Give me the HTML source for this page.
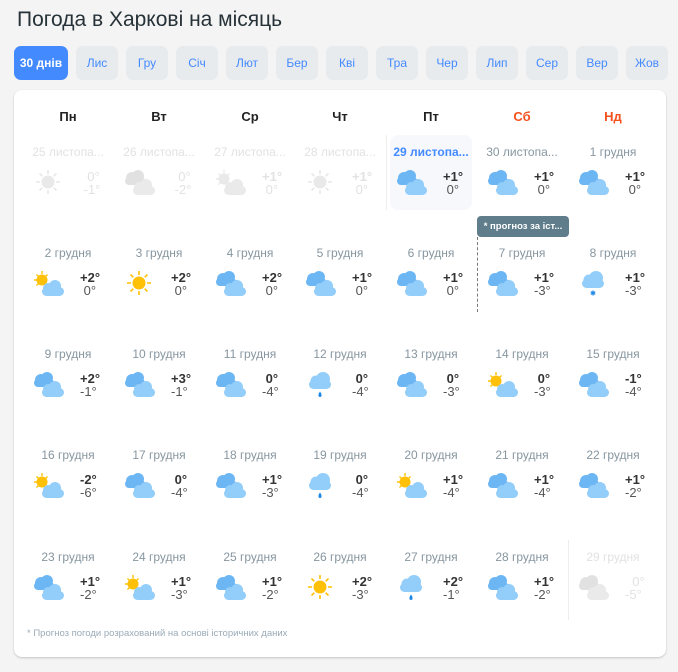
<!DOCTYPE html><html><head><meta charset="utf-8"><style>
body{margin:0;width:678px;height:672px;background:#f4f4f4;font-family:"Liberation Sans","DejaVu Sans",sans-serif;position:relative;overflow:hidden}
h1{position:absolute;left:17px;top:8px;margin:0;font-weight:normal;font-size:21px;color:#263238}
.t{position:absolute;top:46px;height:34px;width:42px;border-radius:7px;background:#e8ebee;color:#448aff;font-size:12px;line-height:34px;text-align:center}
.t.a{background:#448aff;color:#fff;font-weight:bold;width:54px}
.card{position:absolute;left:14px;top:90px;width:652px;height:567px;background:#fff;border-radius:8px;box-shadow:0 1px 2px rgba(0,0,0,.2)}
.h{position:absolute;top:19px;width:90px;text-align:center;font-weight:bold;font-size:13px;color:#222}
.c{position:absolute;width:90px;height:80px}
.d{position:absolute;left:0;top:0;width:90px;text-align:center;font-size:12px;line-height:16px;color:#8796a0;white-space:nowrap}
.c svg{position:absolute;left:8px;top:23px;width:34px;height:30px}
.hi{position:absolute;left:57px;top:26px;font-size:13px;font-weight:bold;color:#333;line-height:13px}
.lo{position:absolute;left:57px;top:39px;font-size:13px;color:#555;line-height:13px}
.f .d,.f .hi,.f .lo{color:#e2e2e2}
.f svg{opacity:.35;filter:grayscale(1)}
</style></head><body>
<svg width="0" height="0" style="position:absolute"><defs>
<g id="cl"><g fill="#6db6f4"><circle cx="10" cy="11" r="6"/><circle cx="16" cy="9" r="6"/><rect x="3" y="10" width="20" height="8" rx="4"/></g><g fill="#93cdf9"><circle cx="17" cy="20" r="5"/><circle cx="24" cy="18" r="6"/><rect x="11" y="19" width="22" height="9" rx="4.5"/></g></g>
<g id="sn"><g stroke="#ffc107" stroke-width="1.6"><path d="M17 3v4M17 23v4M5 15h4M25 15h4M8.5 6.5l2.8 2.8M22.7 20.7l2.8 2.8M8.5 23.5l2.8-2.8M22.7 9.3l2.8-2.8"/></g><circle cx="17" cy="15" r="6.5" fill="#ffc107"/></g>
<g id="sc"><g stroke="#ffc107" stroke-width="1.4"><path d="M11 3v3M3 12h3M5.5 6.5l2 2M16.5 6.5l-2 2M5.5 17.5l2-2"/></g><circle cx="11" cy="12" r="5.5" fill="#ffc107"/><g fill="#93cdf9"><circle cx="17" cy="20" r="5"/><circle cx="24" cy="18" r="6"/><rect x="11" y="19" width="22" height="9" rx="4.5"/></g></g>
<g id="rn"><g fill="#93cdf9"><circle cx="13" cy="12" r="5.5"/><circle cx="20" cy="10" r="7"/><rect x="6" y="11" width="22" height="9" rx="4.5"/></g><path d="M17 22.5c-2 2.5-2.2 5.5 0 5.5s2-3 0-5.5z" fill="#1e88e5"/></g>
<g id="sw"><g fill="#93cdf9"><circle cx="13" cy="12" r="5.5"/><circle cx="20" cy="10" r="7"/><rect x="6" y="11" width="22" height="9" rx="4.5"/></g><path d="M17 22.5v5M14.8 23.7l4.4 2.6M14.8 26.3l4.4-2.6" stroke="#1e88e5" stroke-width="1.3"/></g>
</defs></svg>
<h1>Погода в Харкові на місяць</h1>
<div class="t a" style="left:14px">30 днів</div>
<div class="t" style="left:76px">Лис</div><div class="t" style="left:126px">Гру</div><div class="t" style="left:176px">Січ</div><div class="t" style="left:226px">Лют</div><div class="t" style="left:276px">Бер</div><div class="t" style="left:326px">Кві</div><div class="t" style="left:376px">Тра</div><div class="t" style="left:426px">Чер</div><div class="t" style="left:476px">Лип</div><div class="t" style="left:526px">Сер</div><div class="t" style="left:576px">Вер</div><div class="t" style="left:626px">Жов</div>
<div class="card">
<div class="h" style="left:9px">Пн</div><div class="h" style="left:100px">Вт</div><div class="h" style="left:191px">Ср</div><div class="h" style="left:281px">Чт</div><div class="h" style="left:372px">Пт</div><div class="h" style="left:463px;color:#f4511e">Сб</div><div class="h" style="left:554px;color:#f4511e">Нд</div>
<div style="position:absolute;left:376px;top:45px;width:82px;height:75px;background:#f6f8fb;border-radius:8px"></div>
<div style="position:absolute;left:372px;top:45px;width:1px;height:75px;background:#eee"></div>
<div style="position:absolute;left:554px;top:450px;width:1px;height:80px;background:#eee"></div>
<div style="position:absolute;left:463px;top:126px;width:92px;height:21px;background:#607d8b;border-radius:4px;color:#fff;font-size:9.5px;font-weight:bold;line-height:21px;text-align:center">* прогноз за іст...</div>
<div style="position:absolute;left:463px;top:147px;height:75px;border-left:1px dashed #777"></div>

<div class="c f" style="left:9px;top:54px"><div class="d">25 листопа...</div><svg><use href="#sn"/></svg><div class="hi" style="font-weight:normal">&nbsp;&nbsp;0°</div><div class="lo">&nbsp;-1°</div></div>
<div class="c f" style="left:100px;top:54px"><div class="d">26 листопа...</div><svg><use href="#cl"/></svg><div class="hi" style="font-weight:normal">&nbsp;&nbsp;0°</div><div class="lo">&nbsp;-2°</div></div>
<div class="c f" style="left:191px;top:54px"><div class="d">27 листопа...</div><svg><use href="#sc"/></svg><div class="hi">+1°</div><div class="lo">&nbsp;0°</div></div>
<div class="c f" style="left:281px;top:54px"><div class="d">28 листопа...</div><svg><use href="#sn"/></svg><div class="hi">+1°</div><div class="lo">&nbsp;0°</div></div>
<div class="c" style="left:372px;top:54px"><div class="d" style="color:#448aff;font-weight:bold">29 листопа...</div><svg><use href="#cl"/></svg><div class="hi">+1°</div><div class="lo">&nbsp;0°</div></div>
<div class="c" style="left:463px;top:54px"><div class="d">30 листопа...</div><svg><use href="#cl"/></svg><div class="hi">+1°</div><div class="lo">&nbsp;0°</div></div>
<div class="c" style="left:554px;top:54px"><div class="d">1 грудня</div><svg><use href="#cl"/></svg><div class="hi">+1°</div><div class="lo">&nbsp;0°</div></div>

<div class="c" style="left:9px;top:155px"><div class="d">2 грудня</div><svg><use href="#sc"/></svg><div class="hi">+2°</div><div class="lo">&nbsp;0°</div></div>
<div class="c" style="left:100px;top:155px"><div class="d">3 грудня</div><svg><use href="#sn"/></svg><div class="hi">+2°</div><div class="lo">&nbsp;0°</div></div>
<div class="c" style="left:191px;top:155px"><div class="d">4 грудня</div><svg><use href="#cl"/></svg><div class="hi">+2°</div><div class="lo">&nbsp;0°</div></div>
<div class="c" style="left:281px;top:155px"><div class="d">5 грудня</div><svg><use href="#cl"/></svg><div class="hi">+1°</div><div class="lo">&nbsp;0°</div></div>
<div class="c" style="left:372px;top:155px"><div class="d">6 грудня</div><svg><use href="#cl"/></svg><div class="hi">+1°</div><div class="lo">&nbsp;0°</div></div>
<div class="c" style="left:463px;top:155px"><div class="d">7 грудня</div><svg><use href="#cl"/></svg><div class="hi">+1°</div><div class="lo">-3°</div></div>
<div class="c" style="left:554px;top:155px"><div class="d">8 грудня</div><svg><use href="#sw"/></svg><div class="hi">+1°</div><div class="lo">-3°</div></div>

<div class="c" style="left:9px;top:256px"><div class="d">9 грудня</div><svg><use href="#cl"/></svg><div class="hi">+2°</div><div class="lo">-1°</div></div>
<div class="c" style="left:100px;top:256px"><div class="d">10 грудня</div><svg><use href="#cl"/></svg><div class="hi">+3°</div><div class="lo">-1°</div></div>
<div class="c" style="left:191px;top:256px"><div class="d">11 грудня</div><svg><use href="#cl"/></svg><div class="hi">&nbsp;0°</div><div class="lo">-4°</div></div>
<div class="c" style="left:281px;top:256px"><div class="d">12 грудня</div><svg><use href="#rn"/></svg><div class="hi">&nbsp;0°</div><div class="lo">-4°</div></div>
<div class="c" style="left:372px;top:256px"><div class="d">13 грудня</div><svg><use href="#cl"/></svg><div class="hi">&nbsp;0°</div><div class="lo">-3°</div></div>
<div class="c" style="left:463px;top:256px"><div class="d">14 грудня</div><svg><use href="#sc"/></svg><div class="hi">&nbsp;0°</div><div class="lo">-3°</div></div>
<div class="c" style="left:554px;top:256px"><div class="d">15 грудня</div><svg><use href="#cl"/></svg><div class="hi">-1°</div><div class="lo">-4°</div></div>

<div class="c" style="left:9px;top:357px"><div class="d">16 грудня</div><svg><use href="#sc"/></svg><div class="hi">-2°</div><div class="lo">-6°</div></div>
<div class="c" style="left:100px;top:357px"><div class="d">17 грудня</div><svg><use href="#cl"/></svg><div class="hi">&nbsp;0°</div><div class="lo">-4°</div></div>
<div class="c" style="left:191px;top:357px"><div class="d">18 грудня</div><svg><use href="#cl"/></svg><div class="hi">+1°</div><div class="lo">-3°</div></div>
<div class="c" style="left:281px;top:357px"><div class="d">19 грудня</div><svg><use href="#rn"/></svg><div class="hi">&nbsp;0°</div><div class="lo">-4°</div></div>
<div class="c" style="left:372px;top:357px"><div class="d">20 грудня</div><svg><use href="#sc"/></svg><div class="hi">+1°</div><div class="lo">-4°</div></div>
<div class="c" style="left:463px;top:357px"><div class="d">21 грудня</div><svg><use href="#cl"/></svg><div class="hi">+1°</div><div class="lo">-4°</div></div>
<div class="c" style="left:554px;top:357px"><div class="d">22 грудня</div><svg><use href="#cl"/></svg><div class="hi">+1°</div><div class="lo">-2°</div></div>

<div class="c" style="left:9px;top:459px"><div class="d">23 грудня</div><svg><use href="#cl"/></svg><div class="hi">+1°</div><div class="lo">-2°</div></div>
<div class="c" style="left:100px;top:459px"><div class="d">24 грудня</div><svg><use href="#sc"/></svg><div class="hi">+1°</div><div class="lo">-3°</div></div>
<div class="c" style="left:191px;top:459px"><div class="d">25 грудня</div><svg><use href="#cl"/></svg><div class="hi">+1°</div><div class="lo">-2°</div></div>
<div class="c" style="left:281px;top:459px"><div class="d">26 грудня</div><svg><use href="#sn"/></svg><div class="hi">+2°</div><div class="lo">-3°</div></div>
<div class="c" style="left:372px;top:459px"><div class="d">27 грудня</div><svg><use href="#rn"/></svg><div class="hi">+2°</div><div class="lo">-1°</div></div>
<div class="c" style="left:463px;top:459px"><div class="d">28 грудня</div><svg><use href="#cl"/></svg><div class="hi">+1°</div><div class="lo">-2°</div></div>
<div class="c f" style="left:554px;top:459px"><div class="d">29 грудня</div><svg><use href="#cl"/></svg><div class="hi" style="font-weight:normal">&nbsp;&nbsp;0°</div><div class="lo">-5°</div></div>

<div style="position:absolute;left:13px;top:538px;font-size:9.5px;color:#9aabb8">* Прогноз погоди розрахований на основі історичних даних</div>
</div>
</body></html>
